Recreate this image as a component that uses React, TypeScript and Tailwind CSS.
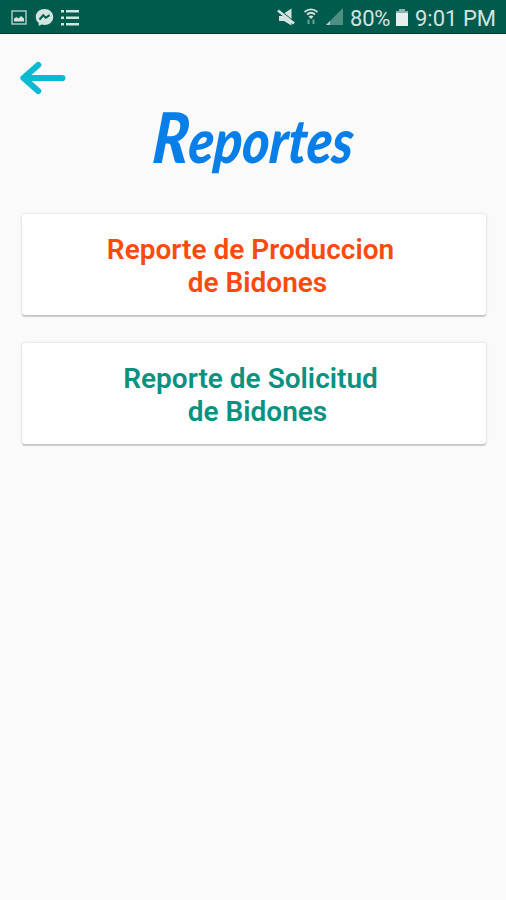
const StatusBar = () => {
  return (
    <header className="flex h-[34px] items-center justify-between border-b border-[#00382f] bg-[#005b4d] pl-[11px] pr-[11px] text-[#d3e3e0]">
      <div className="flex items-center gap-2 pt-0.5">
        {/* Gallery */}
        <svg className="h-4 w-4" viewBox="0 0 16 16" fill="none">
          <rect x="1" y="1" width="14" height="13" stroke="#a9c8c2" strokeWidth="1.5" />
          <path d="M3 11.500V8.500L5.500 7l2 1.500L10 6l3 2.500v3z" fill="currentColor" />
        </svg>
        {/* Messenger */}
        <svg className="h-[19px] w-[19px]" viewBox="0 0 19 19">
          <path
            d="M9.500 1C4.600 1 .8 4.500.8 9c0 2.500 1.100 4.500 2.900 6v3l2.800-1.400c1 .3 2 .4 3 .4 4.900 0 8.700-3.500 8.700-8S14.400 1 9.500 1z"
            fill="currentColor"
          />
          <path d="M4.500 11.500 8.200 7.300l2.600 2.500 3.800-2.700" stroke="#005b4d" strokeWidth="2" fill="none" />
        </svg>
        {/* List */}
        <svg className="-ml-px h-[18px] w-[18px]" viewBox="0 0 18 18" fill="currentColor">
          <path d="M0 1h3v2.500H0zM5 1h13v2.500H5zM0 7.500h3V10H0zM5 7.500h13V10H5zM0 14h3v2.500H0zM5 14h13v2.500H5z" />
        </svg>
      </div>

      <div className="flex items-center pt-px">
        {/* Muted */}
        <svg className="mr-2 h-[18px] w-[18px]" viewBox="0 0 18 18" fill="currentColor">
          <path d="M7.500 5 14.500.500V11z" />
          <path d="M2 8h4l8.500 6v3.500L7 13H2z" />
          <path d="M1 2.500 17 15.500" stroke="currentColor" strokeWidth="2.600" />
        </svg>
        {/* Wifi */}
        <svg className="mr-1.5 h-[18px] w-4" viewBox="0 0 16 18" fill="none" stroke="currentColor">
          <path d="M1.500 4c4-3.300 9-3.300 13 0M4 6.500c2.500-2.200 5.500-2.200 8 0" strokeWidth="1.700" />
          <path d="M5.500 8.500c1.500-1.200 3.500-1.200 5 0L8 11z" fill="currentColor" stroke="none" />
          <path d="M5.500 11.500v4.500M10.500 11.500v4.500" stroke="#6ea198" strokeWidth="2" />
        </svg>
        {/* Signal */}
        <svg className="mr-[7px] h-[18px] w-[18px]" viewBox="0 0 18 18">
          <path d="M18 0v17H1z" fill="#4f8e83" />
          <path d="M5 13v4H1z" fill="#b6d0cb" />
        </svg>
        <span className="w-[41px] whitespace-nowrap pt-1 text-[22px] leading-none tracking-[-0.2px]">80%</span>
        {/* Battery */}
        <svg className="ml-[5px] mr-[7px] h-[17px] w-3" viewBox="0 0 12 17">
          <path d="M3 0h6v2h3v15H0V2h3z" fill="#8cb5ad" />
          <path d="M0 4h12v13H0z" fill="#e6efed" />
        </svg>
        <span className="w-[80px] whitespace-nowrap pt-1 text-[22px] leading-none">9:01 PM</span>
      </div>
    </header>
  );
};

const ReportCard = ({ first, second, color }: { first: string; second: string; color: string }) => {
  return (
    <button
      className={`flex h-[101px] w-full flex-col items-center justify-center rounded-[3px] bg-white pt-0.5 text-[28px] font-semibold leading-[33px] shadow-[0_0_2px_1px_rgba(0,0,0,0.08),0_1.5px_1px_rgba(0,0,0,0.16)] ${color}`}
    >
      <span>{first}&nbsp;</span>
      <span>&nbsp;{second}</span>
    </button>
  );
};

const App = () => {
  return (
    <div className="min-h-screen bg-[#fafafa] font-[Roboto,sans-serif]">
      <StatusBar />

      <main className="pl-[22px] pr-5">
        {/* Back */}
        <button className="-ml-0.5 mt-[27px] block h-[34px] w-[46px]" aria-label="Volver">
          <svg
            viewBox="0 0 46 34"
            fill="none"
            stroke="#0abad0"
            strokeWidth="6.2"
            strokeLinecap="round"
            strokeLinejoin="round"
          >
            <path d="M42.400 17H4M18.200 4 3.500 17l14.700 13" />
          </svg>
        </button>

        {/* Title */}
        <h1 className="flex h-[82px] items-center justify-center font-[Lato,sans-serif] text-[61px] font-black italic leading-none text-[#087ee8]">
          <span className="-skew-x-6 scale-x-[0.85] whitespace-nowrap">
            <span className="text-[70px]">R</span>eportes
          </span>
        </h1>

        <div className="mt-[37px] space-y-7">
          <ReportCard first="Reporte de Produccion" second="de Bidones" color="text-[#fb4a0b]" />
          <ReportCard first="Reporte de Solicitud" second="de Bidones" color="text-[#0b917f]" />
        </div>
      </main>
    </div>
  );
};

export default App;
